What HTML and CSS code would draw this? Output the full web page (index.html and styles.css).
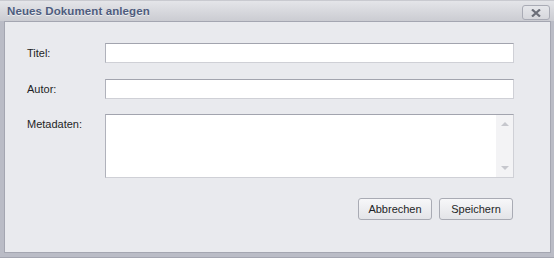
FILE: index.html
```html
<!DOCTYPE html>
<html lang="de">
<head>
<meta charset="utf-8">
<title>Neues Dokument anlegen</title>
<link rel="stylesheet" href="styles.css">
</head>
<body>
<div class="window">
  <div class="titlebar">
    <span class="title">Neues Dokument anlegen</span>
    <button class="close" type="button" aria-label="Schließen">
      <svg width="10" height="8" viewBox="0 0 10 8"><path d="M1 0.5 L9 7.5 M9 0.5 L1 7.5" stroke="#6b6e78" stroke-width="2.2" fill="none"/></svg>
    </button>
  </div>
  <div class="panel">
    <div class="form">
      <label class="label">Titel:</label>
      <input class="field" type="text">
      <label class="label">Autor:</label>
      <input class="field" type="text">
      <label class="label">Metadaten:</label>
      <div class="textarea">
        <div class="scroll">
          <span class="arrow up"></span>
          <span class="arrow down"></span>
        </div>
      </div>
    </div>
    <div class="actions">
      <button class="btn" type="button">Abbrechen</button>
      <button class="btn" type="button">Speichern</button>
    </div>
  </div>
</div>
</body>
</html>
```
FILE: styles.css
```css
* { box-sizing: border-box; }
html, body { margin: 0; padding: 0; }
body {
  width: 554px;
  height: 258px;
  font-family: "Liberation Sans", Arial, sans-serif;
  font-size: 11px;
  color: #1e1f26;
  background: #ffffff;
}
.window {
  width: 554px;
  height: 258px;
  background: #babcc6;
  border-bottom: 1px solid #a3a5b0;
  padding: 0 3px 4px 4px;
  display: flex;
  flex-direction: column;
}
.titlebar {
  height: 21px;
  margin: 0 -3px 0 -4px;
  padding: 0 4px 0 7px;
  background: linear-gradient(#e4e5e9, #cbccd2);
  border-top: 1px solid #c9cad0;
  display: flex;
  align-items: center;
  justify-content: space-between;
}
.title {
  font-weight: bold;
  font-size: 11.5px;
  letter-spacing: 0.1px;
  color: #4e5c7e;
  text-shadow: 0 1px 0 rgba(255,255,255,0.6);
}
.close {
  width: 28px;
  height: 15px;
  margin-top: 3px;
  padding: 0;
  border: 1px solid #a9abb5;
  border-radius: 3px;
  background: linear-gradient(#e6e7eb, #d6d7dc);
  display: flex;
  align-items: center;
  justify-content: center;
}
.panel {
  flex: 1;
  background: #e9eaee;
  border: 1px solid #a4a6b1;
  padding: 21px 36px 0 22px;
  display: flex;
  flex-direction: column;
}
.form {
  display: grid;
  grid-template-columns: 78px 1fr;
  row-gap: 16px;
}
.label {
  line-height: 20px;
  color: #1e1f26;
}
.field {
  height: 20px;
  margin: 0;
  border: 1px solid #cfd0d6;
  border-top-color: #a2a4ae;
  border-left-color: #b0b2bb;
  background: #ffffff;
  font: inherit;
}
.form .label:nth-of-type(3) { margin-top: -1px; }
.textarea {
  height: 64px;
  margin-top: -1px;
  border: 1px solid #cfd0d6;
  border-top-color: #a2a4ae;
  border-left-color: #b0b2bb;
  background: #ffffff;
  display: flex;
  justify-content: flex-end;
}
.scroll {
  width: 17px;
  background: #f3f3f5;
  position: relative;
}
.arrow {
  position: absolute;
  left: 5px;
  width: 0;
  height: 0;
  border-left: 4px solid transparent;
  border-right: 4px solid transparent;
}
.arrow.up { top: 7px; border-bottom: 4px solid #c6c7cd; }
.arrow.down { bottom: 7px; border-top: 4px solid #c6c7cd; }
.actions {
  display: flex;
  justify-content: flex-end;
  gap: 7px;
  margin-top: 20px;
  margin-right: 1px;
}
.btn {
  width: 74px;
  height: 22px;
  margin: 0;
  padding: 0;
  border: 1px solid #a9abb4;
  border-radius: 3px;
  background: linear-gradient(#f7f7f9, #e3e4e8);
  font: inherit;
  font-size: 11px;
  color: #1e1f26;
}
```
